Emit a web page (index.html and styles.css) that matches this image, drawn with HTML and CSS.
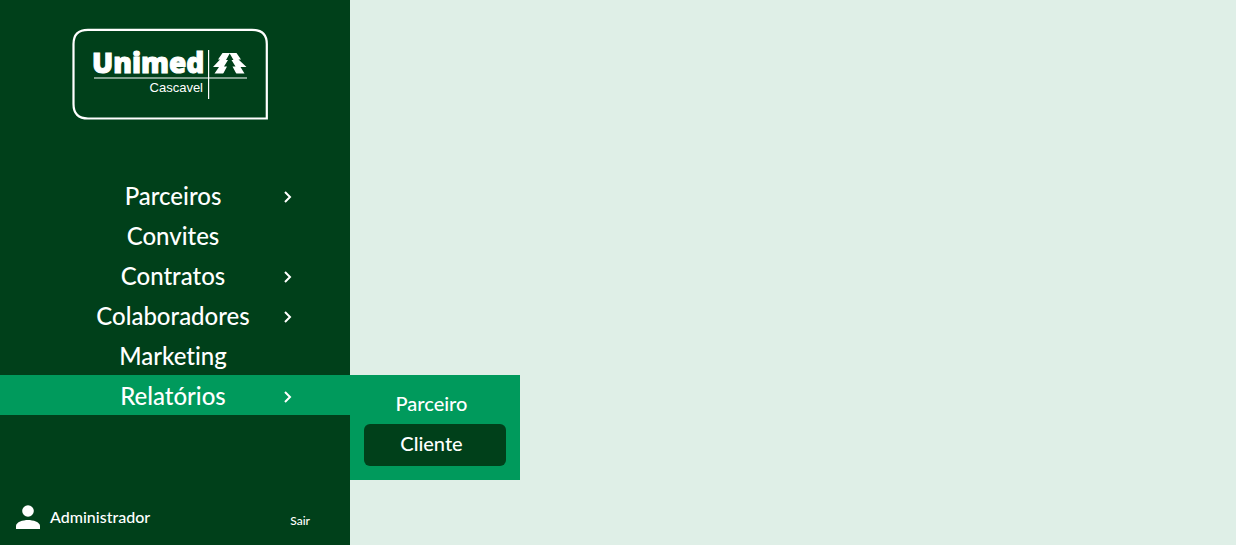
FILE: index.html
```html
<!DOCTYPE html>
<html lang="pt-BR">
<head>
<meta charset="utf-8">
<meta name="viewport" content="width=device-width, initial-scale=1">
<title>Unimed Cascavel</title>
<link rel="stylesheet" href="styles.css">
</head>
<body>
<div class="app">
  <aside class="sidebar">
    <svg class="logo" viewBox="0 0 196 92" role="img" aria-label="Unimed Cascavel">
      <path class="logo-line" stroke-width="2.2" d="M16 1.800H180Q194.800 1.800 194.800 16V90.500H16Q1.500 90.500 1.500 76V16Q1.500 1.800 16 1.800Z"/>
      <text class="logo-name" x="20" y="45" font-size="28">Unimed</text>
      <path class="logo-line" stroke-width="1.200" d="M22 50H175M136.600 22V71"/>
      <text class="logo-city" x="131" y="64" font-size="13" text-anchor="end">Cascavel</text>
      <path class="logo-fill" d="M150.500 25H164.500L169 31.500H166.500L174.500 39H168.500L172.500 45.500H142.500L147 39H141L148 31.500H146Z"/>
      <path class="logo-gap" d="M157.700 25.500L161.500 32H159.500L163.500 38.500H160.500L164.500 46H151L155 38.500H152L156 32H154Z"/>
    </svg>
    <nav class="menu" aria-label="Menu principal">
      <a class="item" href="#">Parceiros<svg class="chevron" viewBox="0 0 8 12"><path d="M1 1L6 6L1 11"/></svg></a>
      <a class="item" href="#">Convites</a>
      <a class="item" href="#">Contratos<svg class="chevron" viewBox="0 0 8 12"><path d="M1 1L6 6L1 11"/></svg></a>
      <a class="item" href="#">Colaboradores<svg class="chevron" viewBox="0 0 8 12"><path d="M1 1L6 6L1 11"/></svg></a>
      <a class="item" href="#">Marketing</a>
      <div class="group">
        <a class="item active" href="#" aria-expanded="true">Relatórios<svg class="chevron" viewBox="0 0 8 12"><path d="M1 1L6 6L1 11"/></svg></a>
        <div class="submenu">
          <a class="subitem" href="#">Parceiro</a>
          <a class="subitem selected" href="#">Cliente</a>
        </div>
      </div>
    </nav>
    <footer class="user">
      <svg class="avatar" viewBox="0 0 24 24"><circle cx="12" cy="6" r="5.800"/><path d="M0 24V21C0 17 7 15 12 15S24 17 24 21V24Z"/></svg>
      <span class="user-name">Administrador</span>
      <a class="logout" href="#">Sair</a>
    </footer>
  </aside>
  <main class="content"></main>
</div>
</body>
</html>
```
FILE: styles.css
```css
* { box-sizing: border-box; }
body {
  margin: 0;
  font-family: Lato, sans-serif;
  font-weight: 500;
  font-variant-ligatures: none;
  color: #fff;
  background: #dfefe7;
}
a { color: inherit; text-decoration: none; }
.app { display: flex; min-height: 100vh; }
.content { flex: 1; }
.sidebar {
  display: flex;
  flex-direction: column;
  flex: 0 0 350px;
  padding-top: 28px;
  background: #00401a;
}
.logo { width: 196px; margin-left: 72px; }
.logo-line { fill: none; stroke: #fff; }
.logo-fill { fill: #fff; }
.logo-gap { fill: #00401a; }
.logo-name {
  fill: #fff;
  stroke: #fff;
  stroke-width: 1;
  font-family: "Open Sans", sans-serif;
  font-weight: 800;
}
.logo-city { fill: #fff; font-family: "Liberation Sans", sans-serif; font-weight: 400; }
.menu { margin-top: 55px; }
.item {
  position: relative;
  display: block;
  height: 40px;
  padding-right: 4px;
  font-size: 24px;
  line-height: 42px;
  text-align: center;
}
.chevron {
  position: absolute;
  top: 16px;
  right: 58px;
  width: 8px;
  height: 12px;
  fill: none;
  stroke: #fff;
  stroke-width: 2;
}
.group { position: relative; }
.active { background: #009a5c; }
.submenu {
  position: absolute;
  top: 0;
  left: 100%;
  width: 170px;
  padding: 9px 14px 14px;
  background: #009a5c;
}
.subitem {
  display: block;
  height: 40px;
  padding-right: 7px;
  border-radius: 6px;
  font-size: 20px;
  line-height: 38px;
  text-align: center;
}
.selected { height: 42px; background: #00401a; }
.user {
  display: flex;
  align-items: center;
  gap: 10px;
  margin-top: auto;
  padding: 0 40px 15px 16px;
}
.avatar { width: 24px; height: 24px; fill: #fff; }
.user-name { font-size: 16px; line-height: 24px; }
.logout { margin-left: auto; padding-top: 8px; font-size: 12px; line-height: 18px; }
```
